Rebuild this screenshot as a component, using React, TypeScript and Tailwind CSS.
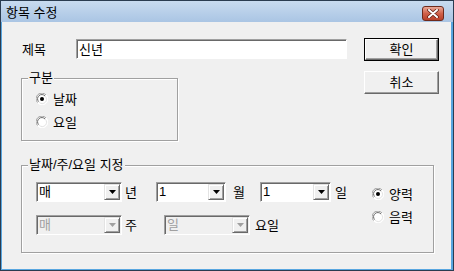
import type { ReactNode } from 'react'

const font = "font-['Liberation_Sans','Noto_Sans_CJK_KR',sans-serif]"

function Radio({ checked, label }: { checked?: boolean; label: string }) {
  return (
    <div className="flex h-[14px] items-center">
      <svg width="12" height="12" viewBox="0 0 12 12" className="shrink-0">
        <circle cx="6" cy="6" r="5.5" fill="#fff" />
        <path d="M10 2 A5.5 5.5 0 0 0 1.5 9.5" stroke="#a0a0a0" strokeWidth="1" fill="none" />
        <path d="M9 3 A4.2 4.2 0 0 0 2.6 8.6" stroke="#696969" strokeWidth="1" fill="none" />
        <path d="M2 10.2 A5.5 5.5 0 0 0 10.2 2" stroke="#ffffff" strokeWidth="1" fill="none" />
        <path d="M3.2 9.3 A4.2 4.2 0 0 0 9.3 3.2" stroke="#e3e3e3" strokeWidth="1" fill="none" />
        {checked && <circle cx="6" cy="6" r="2" fill="#000" />}
      </svg>
      <span className="ml-[5px] text-[13px] leading-none text-black">{label}</span>
    </div>
  )
}

function Combo({ value, width, disabled }: { value: string; width: string; disabled?: boolean }) {
  return (
    <div
      className={`${width} flex h-[20px] border-t border-l border-t-[#a0a0a0] border-l-[#a0a0a0] border-r border-b border-r-white border-b-white shadow-[inset_1px_1px_0_#696969] ${
        disabled ? 'bg-[#f0f0f0]' : 'bg-white'
      }`}
    >
      <span
        className={`flex-1 pl-[2px] pt-[2px] text-[13px] leading-[14px] ${disabled ? 'text-[#a0a0a0]' : 'text-black'}`}
      >
        {value}
      </span>
      <div className="my-[1px] mr-[1px] flex w-[16px] items-center justify-center border-t border-l border-t-[#e3e3e3] border-l-[#e3e3e3] border-r border-b border-r-[#696969] border-b-[#696969] bg-[#f0f0f0] shadow-[inset_1px_1px_0_#fff,inset_-1px_-1px_0_#a0a0a0]">
        <svg width="7" height="4" viewBox="0 0 7 4">
          <path d="M0 0 H7 L3.5 4 Z" fill={disabled ? '#a0a0a0' : '#000'} />
        </svg>
      </div>
    </div>
  )
}

function Button({ children, isDefault }: { children: ReactNode; isDefault?: boolean }) {
  const inner = (
    <div className="flex h-full w-full items-center justify-center border-t border-l border-t-white border-l-white border-r border-b border-r-[#696969] border-b-[#696969] bg-[#f0f0f0] shadow-[inset_-1px_-1px_0_#a0a0a0] text-[13px] leading-none text-black">
      {children}
    </div>
  )
  if (isDefault) {
    return <div className="h-[23px] w-[75px] border border-black">{inner}</div>
  }
  return <div className="h-[23px] w-[75px]">{inner}</div>
}

function Group({
  label,
  className,
  children,
}: {
  label: string
  className: string
  children: ReactNode
}) {
  return (
    <div
      className={`relative border border-[#a0a0a0] shadow-[inset_1px_1px_0_#fff,1px_1px_0_#fff] ${className}`}
    >
      <span className="absolute -top-[8px] left-[6px] bg-[#f0f0f0] px-[1px] text-[13px] leading-[14px] text-black">
        {label}
      </span>
      {children}
    </div>
  )
}

export default function App() {
  return (
    <div className={`${font} flex h-[271px] w-[454px] flex-col border border-[#2a3c50] bg-[#58a6e0] pl-px pr-[2px] pb-[1px]`}>
      {/* title bar */}
      <div className="-ml-px -mr-[2px] flex h-[21px] shrink-0 items-center justify-between bg-gradient-to-b from-[#c8dbef] to-[#aac5e4] pl-[5px] pr-[9px]">
        <span className="pt-[1px] text-[13px] leading-none text-black">항목 수정</span>
        <div className="mt-[3px] flex h-[15px] w-[22px] items-center justify-center rounded-[3px] border border-[#6e2a1c] bg-gradient-to-b from-[#e8a898] via-[#d0614a] to-[#b8402a]">
          <svg width="12" height="9" viewBox="0 0 12 9">
            <path d="M2 1 L10 8 M10 1 L2 8" stroke="#5a1a10" strokeWidth="3.4" strokeLinecap="round" />
            <path d="M2 1 L10 8 M10 1 L2 8" stroke="#fff" strokeWidth="2" strokeLinecap="round" />
          </svg>
        </div>
      </div>

      {/* client area */}
      <div className="flex flex-1 flex-col bg-[#f0f0f0]">
        <div className="mt-[16px] flex">
          <div className="ml-[19px] w-[326px]">
            <div className="mt-[1px] flex h-[20px] items-center">
              <span className="w-[55px] pl-[1px] text-[13px] leading-none text-black">제목</span>
              <div className="flex h-[20px] w-[271px] items-center border-t border-l border-t-[#a0a0a0] border-l-[#a0a0a0] border-r border-b border-r-white border-b-white bg-white pl-[2px] shadow-[inset_1px_1px_0_#696969] text-[13px] leading-none text-black">
                신년
              </div>
            </div>
            <Group label="구분" className="mt-[19px] h-[63px] w-[157px]">
              <div className="flex flex-col gap-[9px] pl-[14px] pt-[13px]">
                <Radio checked label="날짜" />
                <Radio label="요일" />
              </div>
            </Group>
          </div>
          <div className="ml-[17px] flex flex-col gap-[10px]">
            <Button isDefault>확인</Button>
            <Button>취소</Button>
          </div>
        </div>

        <Group label="날짜/주/요일 지정" className="ml-[19px] mt-[24px] h-[88px] w-[413px]">
          <div className="flex pl-[14px] pt-[16px]">
            <div className="w-[336px]">
              <div className="flex items-center">
                <Combo value="매" width="w-[86px]" />
                <span className="w-[34px] pl-[3px] text-[13px] leading-none text-black">년</span>
                <Combo value="1" width="w-[70px]" />
                <span className="w-[34px] pl-[7px] text-[13px] leading-none text-black">월</span>
                <Combo value="1" width="w-[71px]" />
                <span className="pl-[4px] text-[13px] leading-none text-black">일</span>
              </div>
              <div className="mt-[13px] flex items-center">
                <Combo value="매" width="w-[86px]" disabled />
                <span className="w-[42px] pl-[3px] text-[13px] leading-none text-black">주</span>
                <Combo value="일" width="w-[86px]" disabled />
                <span className="pl-[5px] text-[13px] leading-none text-black">요일</span>
              </div>
            </div>
            <div className="mt-[5px] flex flex-col gap-[9px]">
              <Radio checked label="양력" />
              <Radio label="음력" />
            </div>
          </div>
        </Group>
      </div>
    </div>
  )
}
